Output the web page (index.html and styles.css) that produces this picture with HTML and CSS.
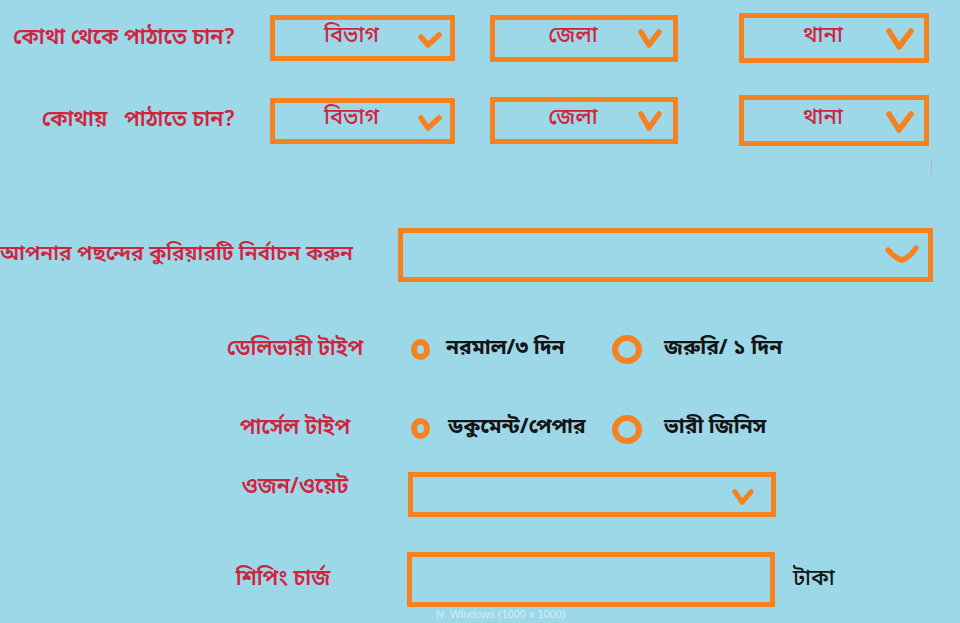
FILE: index.html
```html
<!DOCTYPE html>
<html lang="bn">
<head>
<meta charset="utf-8">
<title>কুরিয়ার</title>
<link rel="stylesheet" href="styles.css">
</head>
<body>
<div class="page">
  <div class="loc-row">
    <div class="loc-label">কোথা থেকে পাঠাতে চান?</div>
    <div class="select s1"><span class="sel-text">বিভাগ</span>
      <svg class="chev chev-s" viewBox="0 0 26 18"><path d="M4 6 L11 14 L22 4"/></svg></div>
    <div class="select s2"><span class="sel-text">জেলা</span>
      <svg class="chev chev-s" viewBox="0 0 26 22"><path d="M4 5 L12 18 L22 5"/></svg></div>
    <div class="select s3"><span class="sel-text">থানা</span>
      <svg class="chev chev-l" viewBox="0 0 30 26"><path d="M4 5 L14 21 L26 5"/></svg></div>
  </div>
  <div class="loc-row r2">
    <div class="loc-label">কোথায়&nbsp;&nbsp; পাঠাতে চান?</div>
    <div class="select s1"><span class="sel-text">বিভাগ</span>
      <svg class="chev chev-s" viewBox="0 0 26 20"><path d="M4 5 L11 15 L22 5"/></svg></div>
    <div class="select s2"><span class="sel-text">জেলা</span>
      <svg class="chev chev-s" viewBox="0 0 26 24"><path d="M4 5 L12 19 L22 5"/></svg></div>
    <div class="select s3"><span class="sel-text">থানা</span>
      <svg class="chev chev-l" viewBox="0 0 30 26"><path d="M4 5 L14 21 L26 5"/></svg></div>
  </div>
  <div class="tick"></div>

  <div class="courier-row">
    <div class="courier-label">আপনার পছন্দের কুরিয়ারটি নির্বাচন করুন</div>
    <div class="select wide">
      <svg class="chev chev-w" viewBox="0 0 36 22"><path d="M4 7 Q11 15 18 17 Q25 15 32 5"/></svg>
    </div>
  </div>

  <div class="form-row opt-row">
    <div class="form-label">ডেলিভারী টাইপ</div>
    <div class="option first"><span class="radio-o"></span><span class="opt-text">নরমাল/৩ দিন</span></div>
    <div class="option"><span class="radio-c"></span><span class="opt-text">জরুরি/ ১ দিন</span></div>
  </div>

  <div class="form-row opt-row parcel">
    <div class="form-label">পার্সেল টাইপ</div>
    <div class="option first"><span class="radio-o"></span><span class="opt-text">ডকুমেন্ট/পেপার</span></div>
    <div class="option"><span class="radio-c"></span><span class="opt-text">ভারী জিনিস</span></div>
  </div>

  <div class="form-row weight">
    <div class="form-label top">ওজন/ওয়েট</div>
    <div class="select mid">
      <svg class="chev chev-s" viewBox="0 0 26 22"><path d="M4 5 L12 17 L22 5"/></svg>
    </div>
  </div>

  <div class="form-row ship">
    <div class="form-label shift">শিপিং চার্জ</div>
    <div class="select mid tall"></div>
    <div class="unit">টাকা</div>
  </div>

  <div class="footnote">N. Windows (1000 x 1000)</div>
</div>
</body>
</html>
```

FILE: styles.css
```css
* { box-sizing: border-box; }
html, body {
  margin: 0;
  padding: 0;
}
body {
  background: #9dd8e9;
  width: 960px;
  height: 623px;
  overflow: hidden;
  font-family: "Noto Sans Bengali", "Lohit Bengali", "Noto Sans", "Liberation Sans", sans-serif;
}
.page {
  padding-top: 13px;
}
.loc-row {
  display: flex;
  align-items: center;
  height: 50px;
}
.loc-row.r2 {
  margin-top: 32px;
  height: 51px;
  padding-left: 3px;
}
.loc-label {
  width: 270px;
  padding-right: 35px;
  text-align: right;
  color: #d2233d;
  font-size: 21.5px;
  font-weight: 600;
  white-space: nowrap;
}
.r2 .loc-label { width: 267px; }

.select {
  position: relative;
  border: 5px solid #f6821f;
  display: flex;
  align-items: center;
  justify-content: center;
  padding-right: 22px;
}
.sel-text {
  color: #d2233d;
  font-size: 22px;
  font-weight: 500;
  line-height: 1;
  padding-bottom: 3px;
}
.s1 { width: 185px; height: 46px; }
.s2 { width: 188px; height: 47px; margin-left: 35px; }
.s3 { width: 190px; height: 50px; margin-left: 61px; }
.r2 .s3 { height: 51px; }

.chev {
  position: absolute;
  fill: none;
  stroke: #f6821f;
  stroke-width: 5.5;
  stroke-linecap: round;
  stroke-linejoin: round;
}
.chev-s { width: 26px; height: 20px; right: 7px; top: 50%; margin-top: -8px; }
.s2 .chev-s { right: 10px; height: 24px; margin-top: -12px; }
.chev-l { width: 30px; height: 26px; right: 9px; top: 50%; margin-top: -12px; }
.chev-w { width: 36px; height: 22px; right: 8px; top: 50%; margin-top: -12px; }

.tick {
  margin-top: 14px;
  margin-left: 931px;
  width: 1px;
  height: 15px;
  background: #a9b9bd;
}

.courier-row {
  display: flex;
  align-items: center;
  margin-top: 53px;
  height: 54px;
}
.courier-label {
  width: 357px;
  color: #d2233d;
  font-size: 21px;
  font-weight: 600;
  white-space: nowrap;
}
.select.wide {
  width: 535px;
  height: 54px;
  margin-left: 41px;
}

.form-row {
  display: flex;
  align-items: center;
  padding-left: 200px;
}
.form-label {
  width: 190px;
  text-align: center;
  color: #d2233d;
  font-size: 21.5px;
  font-weight: 600;
  white-space: nowrap;
}
.form-label.top {
  align-self: flex-start;
  line-height: 32px;
}
.form-label.shift { padding-right: 24px; }

.opt-row {
  margin-top: 52px;
  height: 30px;
}
.opt-row.parcel { margin-top: 49px; }
.option {
  display: flex;
  align-items: center;
}
.option.first {
  width: 201px;
  margin-left: 21px;
}
.opt-text {
  color: #141414;
  font-size: 21px;
  font-weight: bold;
  white-space: nowrap;
}
.parcel .first .opt-text { margin-left: 2px; }
.radio-o {
  width: 19px;
  height: 21px;
  border-radius: 50%;
  border-style: solid;
  border-color: #f6821f;
  border-width: 6px 6.5px;
  margin-right: 16px;
  flex: none;
}
.radio-c {
  width: 30px;
  height: 29px;
  border-radius: 50%;
  border: 6px solid #f6821f;
  margin-right: 22px;
  flex: none;
}
.parcel .radio-c { margin-top: 2px; }

.weight {
  margin-top: 29px;
}
.select.mid {
  width: 368px;
  height: 45px;
  margin-left: 18px;
}
.weight .chev-s { right: 15px; }
.ship {
  margin-top: 35px;
}
.select.tall {
  height: 55px;
  margin-left: 17px;
}
.unit {
  margin-left: 18px;
  color: #141414;
  font-size: 22px;
  font-weight: 500;
}
.footnote {
  margin-top: 1px;
  padding-left: 436px;
  color: #ffffff;
  opacity: 0.55;
  font-size: 11px;
  line-height: 13px;
  font-family: "Liberation Sans", sans-serif;
}
```
